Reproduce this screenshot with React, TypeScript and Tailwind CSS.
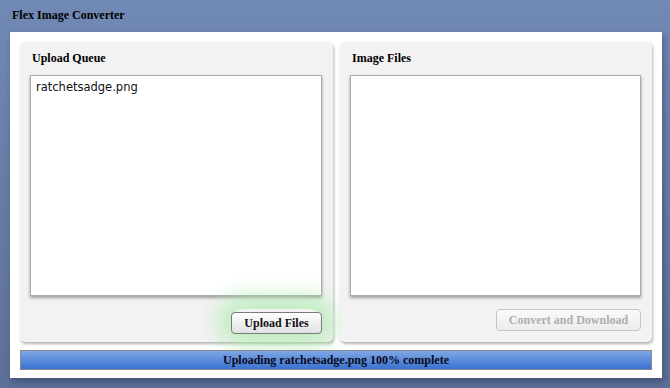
export default function App() {
  const serif = 'font-["Liberation_Serif",serif]'
  return (
    <div className="h-[388px] w-[670px] overflow-hidden bg-gradient-to-b from-[#7189b5] to-[#5c6f96]">
      <div className={`h-8 pl-3 pt-[7px] text-[12px] leading-[16px] font-bold text-black ${serif}`}>
        Flex Image Converter
      </div>

      <div className="ml-[10px] flex h-[346px] w-[652px] flex-col gap-2 bg-white p-[10px] shadow-[2px_4px_6px_rgba(40,50,80,0.45)]">
        <div className="flex gap-[7px]">
          {/* upload queue */}
          <div className="flex h-[300px] w-[313px] flex-col rounded-[5px] bg-[#f2f2f2] px-[10px] pt-2 shadow-[1px_2px_3px_rgba(0,0,0,0.3)]">
            <div className={`h-[25px] pl-[2px] text-[12px] leading-[16px] font-bold text-black ${serif}`}>Upload Queue</div>
            <div className="h-[221px] w-[292px] border border-[#aaa] bg-white px-[5px] py-[3px] shadow-[0_2px_3px_rgba(0,0,0,0.35)]">
              <div className='font-["DejaVu_Sans",sans-serif] text-[11.5px] leading-[16px] text-[#111]'>ratchetsadge.png</div>
            </div>
            <div className="mt-[13px] flex w-[292px] justify-end">
              <div className="rounded-full shadow-[0_0_20px_14px_rgba(165,235,165,0.6)]">
                <button className={`h-[22px] w-[91px] rounded-[4px] border border-[#7a7a7a] bg-gradient-to-b from-white to-[#e2e2e2] text-[12px] font-bold text-[#111] ${serif}`}>
                  Upload Files
                </button>
              </div>
            </div>
          </div>

          {/* image files */}
          <div className="flex h-[300px] w-[312px] flex-col rounded-[5px] bg-[#f2f2f2] px-[10px] pt-2 shadow-[1px_2px_3px_rgba(0,0,0,0.3)]">
            <div className={`h-[25px] pl-[2px] text-[12px] leading-[16px] font-bold text-black ${serif}`}>Image Files</div>
            <div className="h-[221px] w-[291px] border border-[#aaa] bg-white shadow-[0_2px_3px_rgba(0,0,0,0.35)]" />
            <div className="mt-[13px] flex w-[291px] justify-end">
              <button className={`h-[22px] w-[145px] rounded-[4px] border border-[#c4c4c4] bg-gradient-to-b from-[#fafafa] to-[#ececec] text-[12px] font-bold text-[#a9b0b0] ${serif}`}>
                Convert and Download
              </button>
            </div>
          </div>
        </div>

        {/* progress */}
        <div className={`flex h-[20px] w-[632px] items-center justify-center border border-[#888] bg-gradient-to-b from-[#7ea6e4] to-[#3a72d1] text-[12px] font-bold text-[#0a0a1a] ${serif}`}>
          Uploading ratchetsadge.png 100% complete
        </div>
      </div>
    </div>
  )
}
